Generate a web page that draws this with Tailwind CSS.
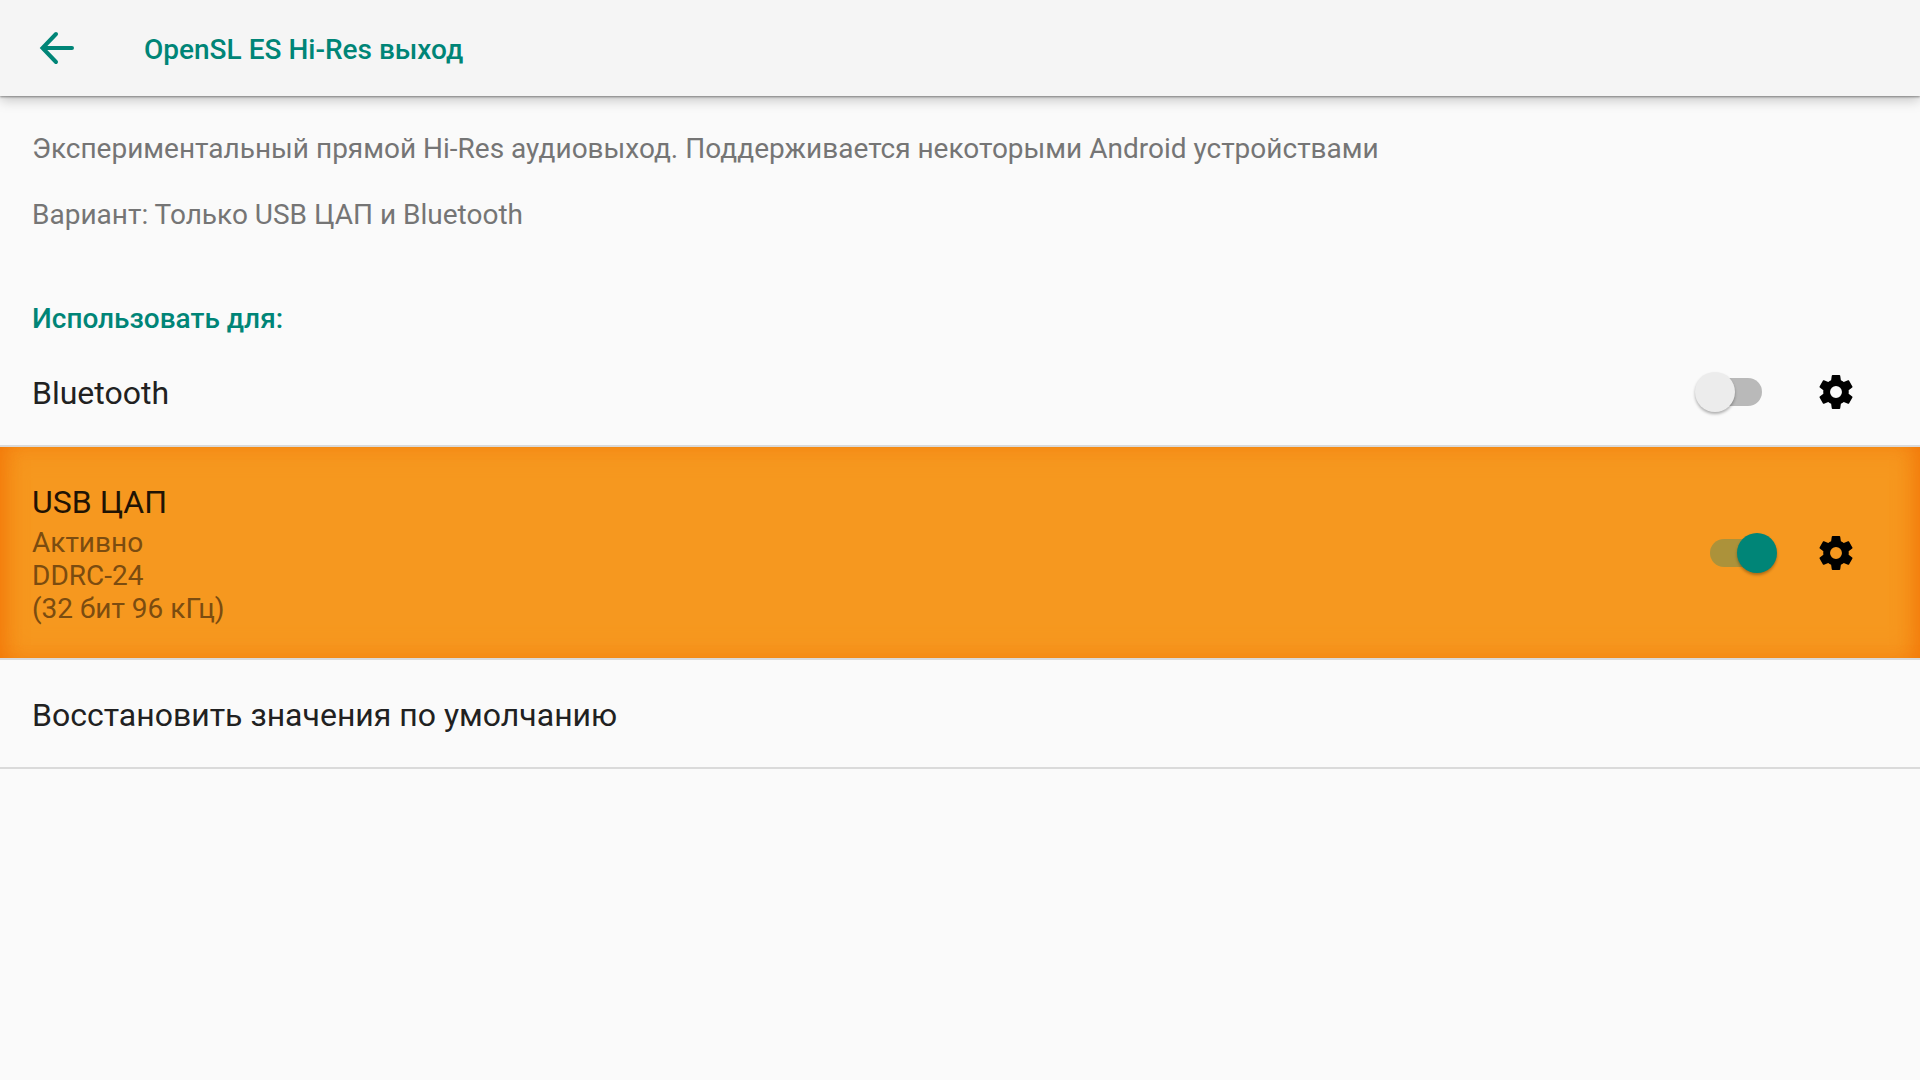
<!DOCTYPE html>
<html lang="ru">
<head>
<meta charset="utf-8">
<meta name="viewport" content="width=device-width, initial-scale=1">
<title>OpenSL ES Hi-Res выход</title>
<script src="https://cdn.jsdelivr.net/npm/@tailwindcss/browser@4"></script>
</head>
<body class="min-h-screen bg-[#fafafa] font-['Roboto',sans-serif] text-[28px] leading-[33px] text-[#212121]">
<svg class="hidden" aria-hidden="true">
  <symbol id="gear" viewBox="2 2 20 20">
    <path d="M19.43 12.98c.04-.32.07-.64.07-.98s-.03-.66-.07-.98l2.11-1.65c.19-.15.24-.42.12-.64l-2-3.46c-.12-.22-.39-.3-.61-.22l-2.49 1c-.52-.4-1.08-.73-1.69-.98l-.38-2.65C14.460 2.180 14.250 2 14 2h-4c-.25 0-.46.18-.49.42l-.38 2.65c-.61.25-1.17.59-1.69.98l-2.49-1c-.23-.09-.49 0-.61.22l-2 3.460c-.13.22-.07.49.12.64l2.110 1.650c-.04.32-.07.65-.07.98s.03.66.07.98l-2.110 1.650c-.19.15-.24.42-.12.64l2 3.460c.12.22.39.3.61.22l2.490-1c.52.4 1.080.73 1.690.98l.38 2.650c.03.24.24.42.49.42h4c.25 0 .46-.18.49-.42l.38-2.650c.61-.25 1.170-.59 1.690-.98l2.490 1c.23.09.49 0 .61-.22l2-3.460c.12-.22.07-.49-.12-.64l-2.110-1.650zM12 15.500a3.500 3.500 0 1 1 0-7 3.500 3.500 0 0 1 0 7z"/>
  </symbol>
</svg>

<header class="relative flex h-24 items-center gap-12 bg-[#f5f5f5] px-8 shadow-[0_1px_2px_rgba(0,0,0,0.4),0_4px_12px_rgba(0,0,0,0.22)]">
  <button type="button" aria-label="Назад" class="flex size-12 items-center justify-center">
    <svg class="size-12" viewBox="0 0 48 48" fill="none" stroke="#008577" stroke-width="4" stroke-linecap="round" aria-hidden="true">
      <path d="M40 24H12M24 10 10.500 24 24 38"/>
    </svg>
  </button>
  <h1 class="ml-4 pt-0.5 font-medium text-[#008577]">OpenSL ES Hi-Res выход</h1>
</header>

<main>
  <div class="px-8 pt-9 text-[#757575]">
    <p>Экспериментальный прямой Hi-Res аудиовыход. Поддерживается некоторыми Android устройствами</p>
    <p class="mt-[33px]">Вариант: Только USB ЦАП и Bluetooth</p>
  </div>

  <h2 class="px-8 pt-[71px] pb-1 font-medium text-[#008577]">Использовать для:</h2>

  <section class="flex h-[108px] items-center border-b-2 border-[#dadada] pr-[67px] pl-8">
    <label for="bluetooth" class="grow pt-0.5 text-[32px] leading-[38px]">Bluetooth</label>
    <span class="relative flex h-10 w-[82px] items-center justify-center">
      <input id="bluetooth" type="checkbox" role="switch" class="peer absolute inset-0 cursor-pointer appearance-none">
      <span class="pointer-events-none h-7 w-[52px] rounded-full bg-[#b9b9b9] peer-checked:bg-[#008577]/30"></span>
      <span class="pointer-events-none absolute left-0 size-10 rounded-full bg-[#ececec] shadow-[0_2px_3px_rgba(0,0,0,0.3)] peer-checked:left-[42px] peer-checked:bg-[#008577]"></span>
    </span>
    <button type="button" aria-label="Настройки Bluetooth" class="ml-[42px] flex size-[34px] items-center justify-center">
      <svg class="size-[34px] fill-black" aria-hidden="true"><use href="#gear"/></svg>
    </button>
  </section>

  <section class="flex h-[213px] items-center border-b-2 border-[#dadada] bg-[#f6981f] bg-clip-padding pr-[67px] pl-8 shadow-[inset_18px_0_24px_-16px_#f27405,inset_-18px_0_24px_-16px_#f27405,inset_0_0_28px_#f58a18]">
    <div class="grow pt-0.5">
      <label for="usb" class="block text-[32px] leading-[38px] text-[#1f1304]">USB ЦАП</label>
      <p class="mt-[5px] text-[#7b4c10]">Активно<br>DDRC-24<br>(32 бит 96 кГц)</p>
    </div>
    <span class="relative flex h-10 w-[82px] items-center justify-center">
      <input id="usb" type="checkbox" role="switch" checked class="peer absolute inset-0 cursor-pointer appearance-none">
      <span class="pointer-events-none h-7 w-[52px] rounded-full bg-[#b9b9b9] peer-checked:bg-[#008577]/30"></span>
      <span class="pointer-events-none absolute left-0 size-10 rounded-full bg-[#ececec] shadow-[0_2px_3px_rgba(0,0,0,0.3)] peer-checked:left-[42px] peer-checked:bg-[#008577]"></span>
    </span>
    <button type="button" aria-label="Настройки USB ЦАП" class="ml-[42px] flex size-[34px] items-center justify-center">
      <svg class="size-[34px] fill-black" aria-hidden="true"><use href="#gear"/></svg>
    </button>
  </section>

  <button type="button" class="flex h-[109px] w-full items-center border-b-2 border-[#dadada] px-8 pt-0.5 text-left text-[32px] leading-[38px]">Восстановить значения по умолчанию</button>
</main>
</body>
</html>
